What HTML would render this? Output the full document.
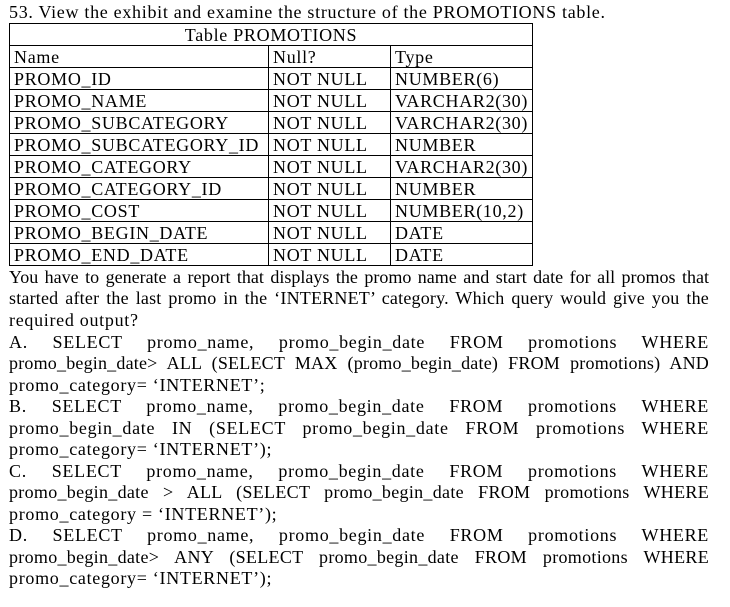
<!DOCTYPE html>
<html><head><style>
body{margin:0;background:#fff;width:730px;height:607px;overflow:hidden;font-family:"Liberation Serif",serif;font-size:18px;letter-spacing:0.7px;color:#000;position:relative}
.l{position:absolute;left:9px;width:700px;white-space:nowrap;line-height:20px}
.j{text-align:justify;text-align-last:justify;white-space:normal}
table{position:absolute;left:9px;top:23px;border-collapse:collapse;width:524px}
td{border:1px solid #000;height:21px;padding:0 0 0 4px;line-height:20px;font-size:18px;white-space:nowrap}
</style></head><body>
<div class="l" style="top:2px">53. View the exhibit and examine the structure of the PROMOTIONS table.</div>
<table>
<tr><td colspan="3" style="text-align:center;padding:0">Table PROMOTIONS</td></tr>
<tr><td style="width:254px">Name</td><td style="width:117px">Null?</td><td>Type</td></tr>
<tr><td>PROMO_ID</td><td>NOT NULL</td><td>NUMBER(6)</td></tr>
<tr><td>PROMO_NAME</td><td>NOT NULL</td><td>VARCHAR2(30)</td></tr>
<tr><td>PROMO_SUBCATEGORY</td><td>NOT NULL</td><td>VARCHAR2(30)</td></tr>
<tr><td>PROMO_SUBCATEGORY_ID</td><td>NOT NULL</td><td>NUMBER</td></tr>
<tr><td>PROMO_CATEGORY</td><td>NOT NULL</td><td>VARCHAR2(30)</td></tr>
<tr><td>PROMO_CATEGORY_ID</td><td>NOT NULL</td><td>NUMBER</td></tr>
<tr><td>PROMO_COST</td><td>NOT NULL</td><td>NUMBER(10,2)</td></tr>
<tr><td>PROMO_BEGIN_DATE</td><td>NOT NULL</td><td>DATE</td></tr>
<tr><td>PROMO_END_DATE</td><td>NOT NULL</td><td>DATE</td></tr>
</table>
<div class="l j" style="top:267px;letter-spacing:0">You have to generate a report that displays the promo name and start date for all promos that</div>
<div class="l j" style="top:288px;letter-spacing:0.2px">started after the last promo in the ‘INTERNET’ category. Which query would give you the</div>
<div class="l" style="top:310px">required output?</div>
<div class="l j" style="top:332px">A. SELECT promo_name, promo_begin_date FROM promotions WHERE</div>
<div class="l j" style="top:353px;letter-spacing:0.2px">promo_begin_date&gt; ALL (SELECT MAX (promo_begin_date) FROM promotions) AND</div>
<div class="l" style="top:375px">promo_category= ‘INTERNET’;</div>
<div class="l j" style="top:396px">B. SELECT promo_name, promo_begin_date FROM promotions WHERE</div>
<div class="l j" style="top:418px">promo_begin_date IN (SELECT promo_begin_date FROM promotions WHERE</div>
<div class="l" style="top:439px">promo_category= ‘INTERNET’);</div>
<div class="l j" style="top:461px">C. SELECT promo_name, promo_begin_date FROM promotions WHERE</div>
<div class="l j" style="top:482px;letter-spacing:0.3px">promo_begin_date &gt; ALL (SELECT promo_begin_date FROM promotions WHERE</div>
<div class="l" style="top:504px">promo_category = ‘INTERNET’);</div>
<div class="l j" style="top:525px">D. SELECT promo_name, promo_begin_date FROM promotions WHERE</div>
<div class="l j" style="top:547px;letter-spacing:0.3px">promo_begin_date&gt; ANY (SELECT promo_begin_date FROM promotions WHERE</div>
<div class="l" style="top:568px">promo_category= ‘INTERNET’);</div>
</body></html>
